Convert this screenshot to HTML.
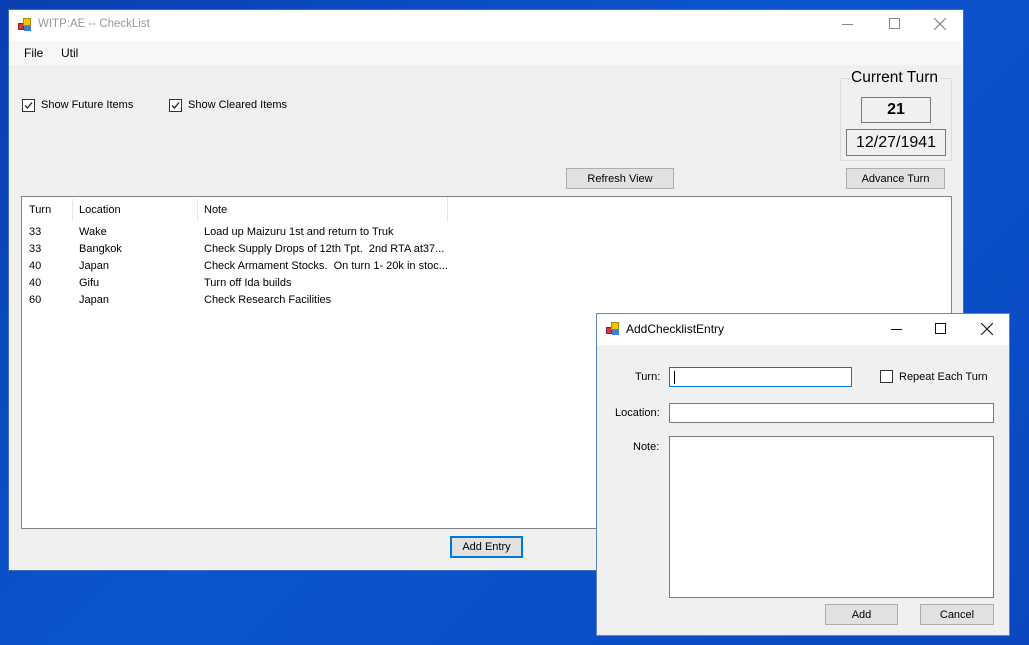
<!DOCTYPE html>
<html><head><meta charset="utf-8"><style>
*{box-sizing:border-box;margin:0;padding:0}
body{width:1029px;height:645px;overflow:hidden;position:relative;background:linear-gradient(135deg,#0a3fb0 0%,#0b55cf 45%,#0a48c0 100%);font-family:"Liberation Sans",sans-serif;font-size:11px;color:#000}
.abs{position:absolute}
.win{background:#f0f0f0;border:1px solid #2b5fb8}
.btn{position:absolute;background:#e1e1e1;border:1px solid #adadad;text-align:center;font-size:11px;line-height:21px}
.cb{position:absolute;width:13px;height:13px;border:1px solid #333;background:#fff}
.tb{position:absolute;background:#fff;border:1px solid #7a7a7a}
.icon{position:absolute;width:14px;height:14px}
.icon i{position:absolute;display:block}
</style></head><body>

<div class="abs win" style="left:8px;top:9px;width:956px;height:562px;border-color:#3b6fc4">
  <div class="abs" style="left:0;top:0;width:954px;height:31px;background:#fff"></div>
  <div class="icon" style="left:9px;top:8px">
    <i style="left:0;top:5px;width:6px;height:7px;background:#d33;border:1px solid #822"></i>
    <i style="left:5px;top:0;width:8px;height:8px;background:#f5c400;border:1px solid #a80"></i>
    <i style="left:6px;top:8px;width:7px;height:5px;background:#3a7fd8"></i>
  </div>
  <div class="abs" style="left:29px;top:8px;font-size:11.5px;color:#999">WITP:AE -- CheckList</div>
  <div class="abs" style="left:833px;top:14px;width:11px;height:1px;background:#888"></div>
  <div class="abs" style="left:880px;top:8px;width:11px;height:11px;border:1px solid #888"></div>
  <svg class="abs" style="left:925px;top:8px" width="12" height="12"><path d="M0 0L12 12M12 0L0 12" stroke="#888" stroke-width="1.2"/></svg>
  <div class="abs" style="left:0;top:31px;width:954px;height:24px;background:#f7f7f7"></div>
  <div class="abs" style="left:15px;top:36px;font-size:12px">File</div>
  <div class="abs" style="left:52px;top:36px;font-size:12px">Util</div>

  <div class="cb" style="left:13px;top:89px"></div>
  <svg class="abs" style="left:14px;top:90px" width="11" height="11"><path d="M2 5.5L4.5 8L9 2.5" stroke="#222" stroke-width="1.3" fill="none"/></svg>
  <div class="abs" style="left:32px;top:89px">Show Future Items</div>
  <div class="cb" style="left:160px;top:89px"></div>
  <svg class="abs" style="left:161px;top:90px" width="11" height="11"><path d="M2 5.5L4.5 8L9 2.5" stroke="#222" stroke-width="1.3" fill="none"/></svg>
  <div class="abs" style="left:179px;top:89px">Show Cleared Items</div>

  <div class="abs" style="left:831px;top:68px;width:112px;height:83px;border:1px solid #dcdcdc"></div>
  <div class="abs" style="left:840px;top:59px;padding:0 2px;background:#f0f0f0;font-size:15.5px">Current Turn</div>
  <div class="abs" style="left:852px;top:87px;width:70px;height:26px;border:1px solid #7a7a7a;text-align:center;font-size:16px;font-weight:bold;line-height:24px">21</div>
  <div class="abs" style="left:837px;top:119px;width:100px;height:27px;border:1px solid #7a7a7a;text-align:center;font-size:16px;line-height:25px">12/27/1941</div>

  <div class="btn" style="left:557px;top:158px;width:108px;height:21px">Refresh View</div>
  <div class="btn" style="left:837px;top:158px;width:99px;height:21px">Advance Turn</div>

  <div class="abs" style="left:12px;top:186px;width:931px;height:333px;background:#fff;border:1px solid #828282">
    <div class="abs" style="left:0;top:0;width:426px;height:25px;border-right:1px solid #e5e5e5"></div>
    <div class="abs" style="left:50px;top:2px;width:1px;height:22px;background:#e5e5e5"></div>
    <div class="abs" style="left:175px;top:2px;width:1px;height:22px;background:#e5e5e5"></div>
    <div class="abs" style="left:7px;top:7px">Turn</div>
    <div class="abs" style="left:57px;top:7px">Location</div>
    <div class="abs" style="left:182px;top:7px">Note</div>
    <div class="abs" style="left:7px;top:27px;line-height:17px">33<br>33<br>40<br>40<br>60</div>
    <div class="abs" style="left:57px;top:27px;line-height:17px">Wake<br>Bangkok<br>Japan<br>Gifu<br>Japan</div>
    <div class="abs" style="left:182px;top:27px;line-height:17px;white-space:nowrap">Load up Maizuru 1st and return to Truk<br>Check Supply Drops of 12th Tpt.&nbsp; 2nd RTA at37...<br>Check Armament Stocks.&nbsp; On turn 1- 20k in stoc...<br>Turn off Ida builds<br>Check Research Facilities</div>
  </div>
  <div class="btn" style="left:441px;top:526px;width:73px;height:22px;border:2px solid #0078d7;line-height:19px">Add Entry</div>
</div>

<div class="abs win" style="left:596px;top:313px;width:414px;height:323px;border-color:#5a86c8">
  <div class="abs" style="left:0;top:0;width:412px;height:31px;background:#fff"></div>
  <div class="icon" style="left:9px;top:8px">
    <i style="left:0;top:5px;width:6px;height:7px;background:#d33;border:1px solid #822"></i>
    <i style="left:5px;top:0;width:8px;height:8px;background:#f5c400;border:1px solid #a80"></i>
    <i style="left:6px;top:8px;width:7px;height:5px;background:#3a7fd8"></i>
  </div>
  <div class="abs" style="left:29px;top:8px;font-size:12px">AddChecklistEntry</div>
  <div class="abs" style="left:294px;top:15px;width:11px;height:1px;background:#111"></div>
  <div class="abs" style="left:338px;top:9px;width:11px;height:11px;border:1px solid #111"></div>
  <svg class="abs" style="left:384px;top:9px" width="12" height="12"><path d="M0 0L12 12M12 0L0 12" stroke="#111" stroke-width="1.1"/></svg>

  <div class="abs" style="left:38px;top:57px">Turn:</div>
  <div class="tb" style="left:72px;top:53px;width:183px;height:20px;border-color:#0078d7"></div>
  <div class="abs" style="left:77px;top:57px;width:1px;height:13px;background:#000"></div>
  <div class="cb" style="left:283px;top:56px;border-color:#333"></div>
  <div class="abs" style="left:302px;top:57px">Repeat Each Turn</div>

  <div class="abs" style="left:18px;top:93px">Location:</div>
  <div class="tb" style="left:72px;top:89px;width:325px;height:20px"></div>

  <div class="abs" style="left:36px;top:127px">Note:</div>
  <div class="tb" style="left:72px;top:122px;width:325px;height:162px"></div>

  <div class="btn" style="left:228px;top:290px;width:73px;height:21px">Add</div>
  <div class="btn" style="left:323px;top:290px;width:74px;height:21px">Cancel</div>
</div>
</body></html>
